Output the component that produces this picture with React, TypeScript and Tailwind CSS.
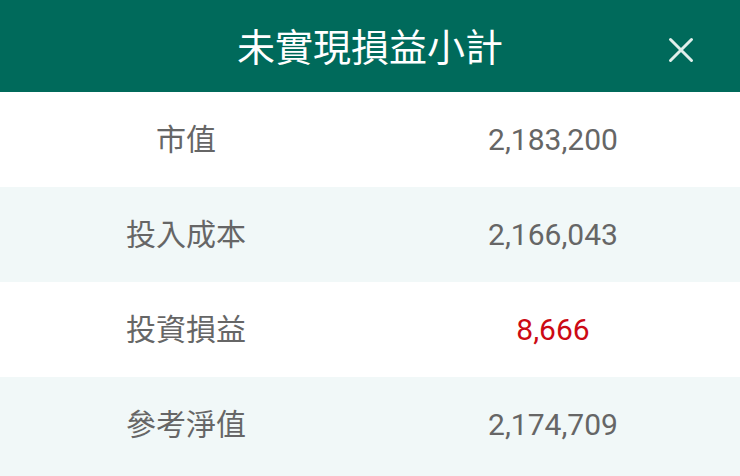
const rows = [
  { label: "市值", value: "2,183,200", red: false },
  { label: "投入成本", value: "2,166,043", red: false },
  { label: "投資損益", value: "8,666", red: true },
  { label: "參考淨值", value: "2,174,709", red: false },
];

export default function App() {
  return (
    <div
      className="w-[740px] h-[476px] flex flex-col bg-white overflow-hidden"
      style={{ fontFamily: 'Roboto, "Noto Sans CJK TC", sans-serif' }}
    >
      <div className="relative h-[92px] shrink-0 bg-[#006a5b] flex items-center justify-center">
        <h1 className="text-white text-[38px] leading-none pt-[6px] pb-[2px]">
          未實現損益小計
        </h1>
        <button className="absolute right-[44px] top-[35px] w-[30px] h-[30px] flex items-center justify-center">
          <svg width="28" height="28" viewBox="0 0 28 28" fill="none">
            <path
              d="M3.5 3.5L24.5 24.5M24.5 3.5L3.5 24.5"
              stroke="#e0efeb"
              strokeWidth="3"
              strokeLinecap="round"
            />
          </svg>
        </button>
      </div>
      {rows.map((r, i) => (
        <div
          key={r.label}
          className={`${i === rows.length - 1 ? "flex-1 pb-[4px]" : "h-[95px]"} shrink-0 grid grid-cols-2 items-center ${
            i % 2 === 1 ? "bg-[#f1f8f8]" : "bg-white"
          }`}
        >
          <div className="text-center text-[30px] text-[#666666] pl-[2px]">{r.label}</div>
          <div
            className={`text-center text-[30px] pr-[4px] ${r.red ? "text-[#cc0a14]" : "text-[#666666]"}`}
          >
            {r.value}
          </div>
        </div>
      ))}
    </div>
  );
}
